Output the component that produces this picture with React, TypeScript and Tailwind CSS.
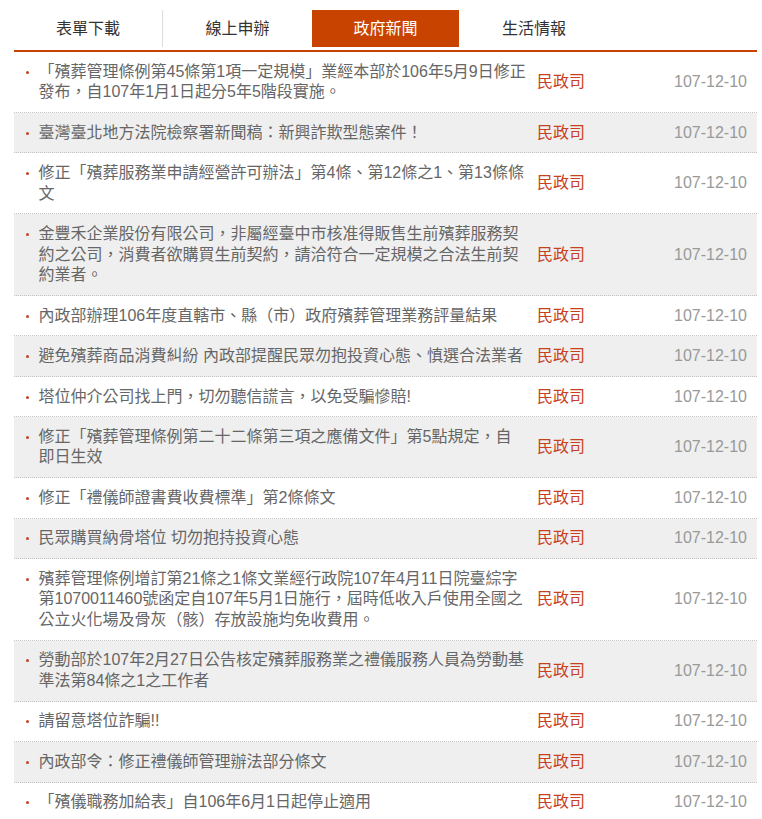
import React from "react";

type Item = { lines: string[] };

const items: Item[] = [
  { lines: ["「殯葬管理條例第45條第1項一定規模」業經本部於106年5月9日修正", "發布，自107年1月1日起分5年5階段實施。"] },
  { lines: ["臺灣臺北地方法院檢察署新聞稿：新興詐欺型態案件！"] },
  { lines: ["修正「殯葬服務業申請經營許可辦法」第4條、第12條之1、第13條條", "文"] },
  { lines: ["金豐禾企業股份有限公司，非屬經臺中市核准得販售生前殯葬服務契", "約之公司，消費者欲購買生前契約，請洽符合一定規模之合法生前契", "約業者。"] },
  { lines: ["內政部辦理106年度直轄市、縣（市）政府殯葬管理業務評量結果"] },
  { lines: ["避免殯葬商品消費糾紛 內政部提醒民眾勿抱投資心態、慎選合法業者"] },
  { lines: ["塔位仲介公司找上門，切勿聽信謊言，以免受騙慘賠!"] },
  { lines: ["修正「殯葬管理條例第二十二條第三項之應備文件」第5點規定，自", "即日生效"] },
  { lines: ["修正「禮儀師證書費收費標準」第2條條文"] },
  { lines: ["民眾購買納骨塔位 切勿抱持投資心態"] },
  { lines: ["殯葬管理條例增訂第21條之1條文業經行政院107年4月11日院臺綜字", "第1070011460號函定自107年5月1日施行，屆時低收入戶使用全國之", "公立火化場及骨灰（骸）存放設施均免收費用。"] },
  { lines: ["勞動部於107年2月27日公告核定殯葬服務業之禮儀服務人員為勞動基", "準法第84條之1之工作者"] },
  { lines: ["請留意塔位詐騙!!"] },
  { lines: ["內政部令：修正禮儀師管理辦法部分條文"] },
  { lines: ["「殯儀職務加給表」自106年6月1日起停止適用"] },
];

const tabs = ["表單下載", "線上申辦", "政府新聞", "生活情報"];
const tabWidths = ["w-[149px] border-r border-[#dddddd]", "w-[149px]", "w-[147px]", "w-[150px]"];

export default function App() {
  return (
    <div
      className="bg-white min-h-[819px] pt-[10px] pl-[14px]"
      style={{ fontFamily: '"Liberation Sans", "Noto Sans CJK TC", sans-serif' }}
    >
      <div className="w-[743px]">
        <div className="flex h-[37px]">
          {tabs.map((t, i) => (
            <div
              key={t}
              className={
                "flex items-center justify-center text-[16px] " +
                tabWidths[i] +
                (i === 2 ? " bg-[#c84300] text-white" : " text-[#333333]")
              }
            >
              {t}
            </div>
          ))}
        </div>
        <ul className="mt-[3px] border-t-2 border-[#c84300]">
          {items.map((it, idx) => (
            <li
              key={idx}
              className={
                "flex items-center pt-[9.6px] pb-[9.4px] border-b border-dotted border-[#c4c4c4] " +
                (idx % 2 === 1 ? "bg-[#efefef]" : "bg-white")
              }
            >
              <div className="flex items-start w-[520px] shrink-0">
                <span className="mt-[9px] ml-[11.5px] w-[3px] h-[3px] rounded-full bg-[#c8401e] shrink-0" />
                <div className="ml-[10px] text-[16px] leading-[20.5px] text-[#666666]">
                  {it.lines.map((l, j) => (
                    <div key={j} className="whitespace-nowrap">
                      {l}
                    </div>
                  ))}
                </div>
              </div>
              <span className="ml-[3px] text-[16px] leading-[20.5px] text-[#c8401e] whitespace-nowrap">民政司</span>
              <span className="ml-auto mr-[10px] text-[16px] leading-[20.5px] text-[#999999] whitespace-nowrap">107-12-10</span>
            </li>
          ))}
        </ul>
      </div>
    </div>
  );
}
